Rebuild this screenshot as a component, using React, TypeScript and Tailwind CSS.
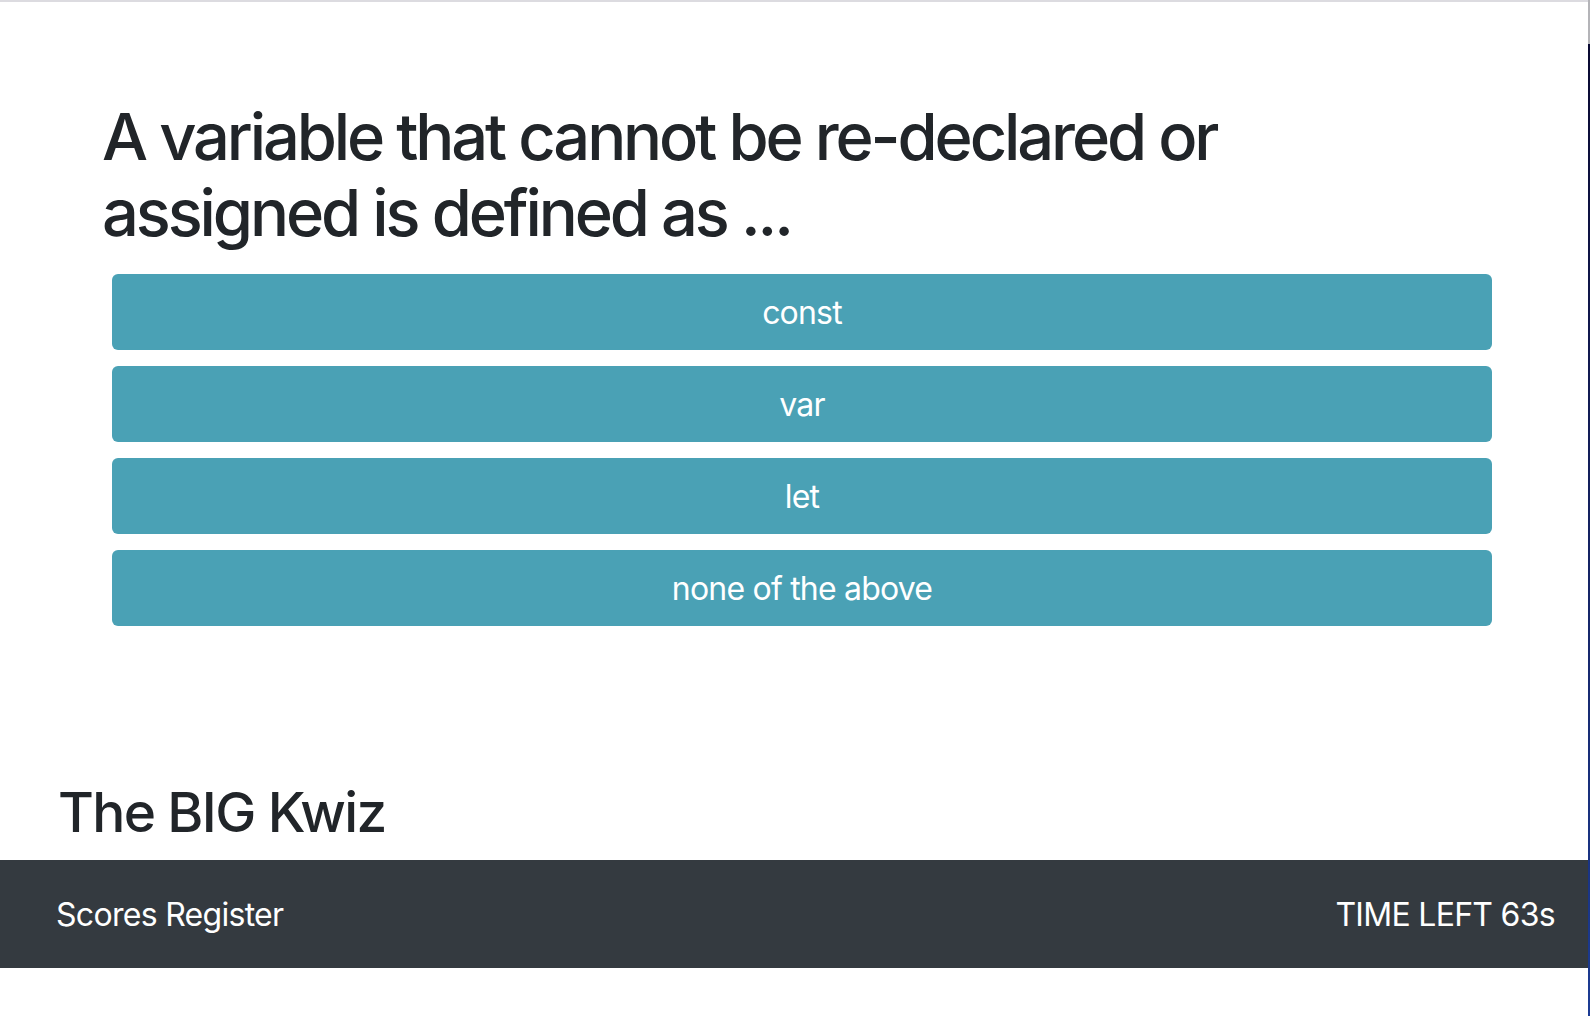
import React from "react";

const answers = ["const", "var", "let", "none of the above"];

const App: React.FC = () => {
    return (
        <div className="flex w-[1590px] h-[1016px] bg-white font-['Inter',sans-serif] text-[#212529] overflow-hidden">
            <div className="flex flex-col flex-1">
                <div className="h-[2px] bg-[#dcdbe0]" />
                <h1 className="mt-[97px] pl-[102px] text-[65px] leading-[76px] font-medium tracking-[-0.048em]">
                    A variable that cannot be re-declared or
                    <br />
                    assigned is defined as ...
                </h1>
                <div className="mt-[23px] ml-[112px] w-[1380px] flex flex-col gap-4">
                    {answers.map((a) => (
                        <button
                            key={a}
                            className="h-[76px] pt-[2px] rounded-[6px] bg-[#4aa1b5] text-white text-[32px] leading-[40px] tracking-[-0.025em]"
                        >
                            {a}
                        </button>
                    ))}
                </div>
                <h2 className="mt-[153px] pl-[58px] text-[55px] leading-[66px] font-medium tracking-[-0.03em]">
                    The BIG Kwiz
                </h2>
                <div className="mt-[15px] h-[108px] pt-[2px] bg-[#343a40] flex items-center justify-between pl-[56px] pr-[33px] text-white text-[32px] leading-[40px] tracking-[-0.022em]">
                    <span>Scores Register</span>
                    <span>TIME LEFT 63s</span>
                </div>
                <div className="flex-1" />
            </div>
            <div className="w-[2px] flex flex-col">
                <div className="h-[44px] bg-[#b4b4b8]" />
                <div className="flex-1 bg-gradient-to-b from-[#0a0a32] to-[#1c3c94]" />
            </div>
        </div>
    );
};

export default App;
